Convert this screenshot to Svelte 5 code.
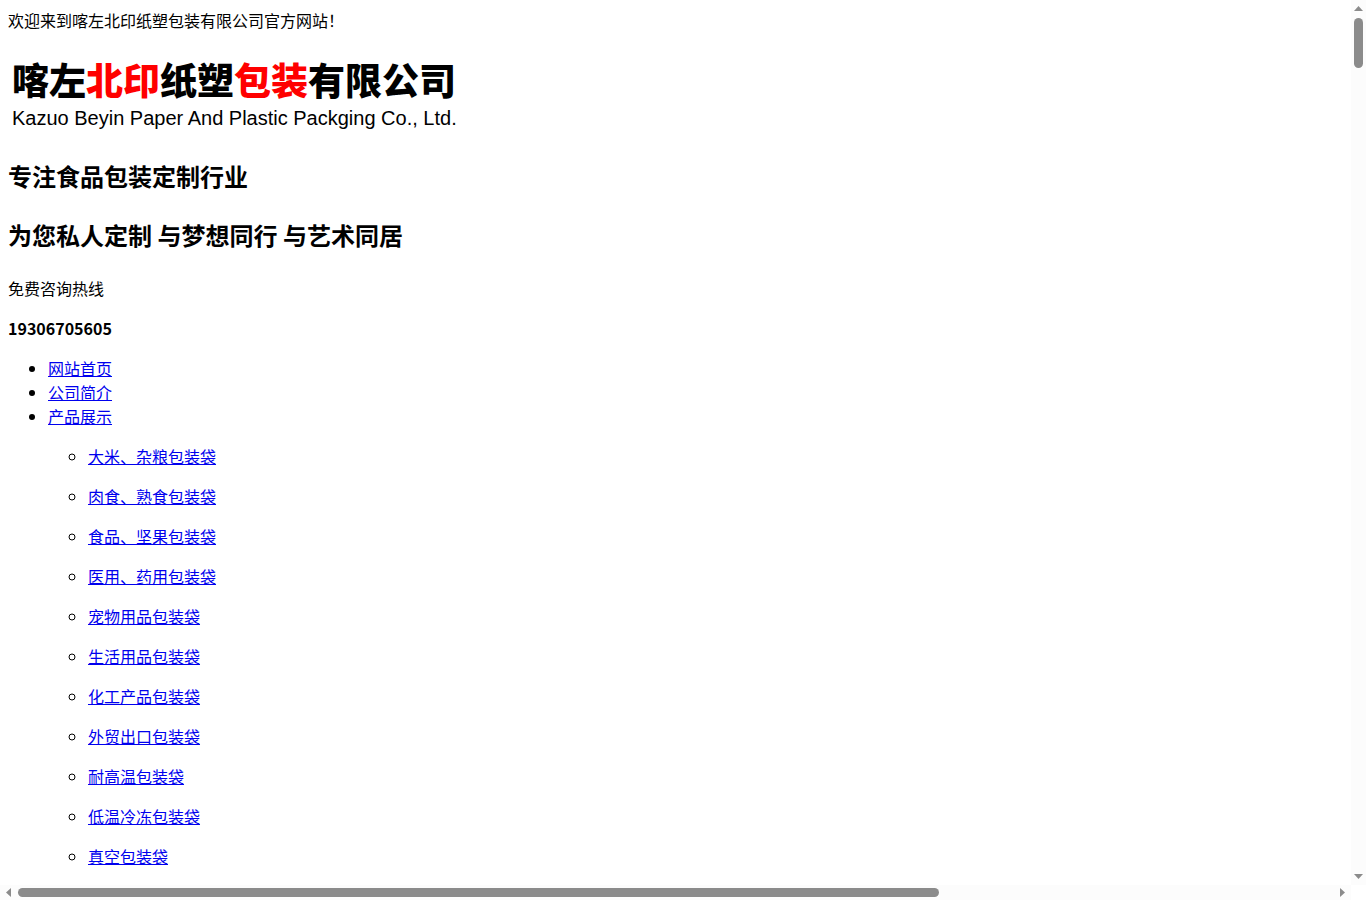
<script>
  const mainLinks = ["网站首页", "公司简介"];
  const products = [
    "大米、杂粮包装袋",
    "肉食、熟食包装袋",
    "食品、坚果包装袋",
    "医用、药用包装袋",
    "宠物用品包装袋",
    "生活用品包装袋",
    "化工产品包装袋",
    "外贸出口包装袋",
    "耐高温包装袋",
    "低温冷冻包装袋",
    "真空包装袋",
  ];
</script>

<div class="window">
  <main class="page">
    <div class="welcome">欢迎来到喀左北印纸塑包装有限公司官方网站！</div>

    <div class="logo">
      <div class="logo-name">喀左<span>北印</span>纸塑<span>包装</span>有限公司</div>
      <div class="logo-en">Kazuo Beyin Paper And Plastic Packging Co., Ltd.</div>
    </div>

    <h2>专注食品包装定制行业</h2>
    <h2>为您私人定制 与梦想同行 与艺术同居</h2>
    <p>免费咨询热线</p>
    <p><b>19306705605</b></p>

    <nav>
      <ul>
        {#each mainLinks as link}
          <li><a href="#top">{link}</a></li>
        {/each}
        <li>
          <a href="#top">产品展示</a>
          <ul>
            {#each products as product}
              <li><p><a href="#top">{product}</a></p></li>
            {/each}
          </ul>
        </li>
      </ul>
    </nav>
  </main>

  <div class="bar vertical" aria-hidden="true">
    <svg width="9" height="5" viewBox="0 0 9 5"><path d="M0 5 4.500 0 9 5z" /></svg>
    <div class="track"><div class="thumb"></div></div>
    <svg width="9" height="5" viewBox="0 0 9 5"><path d="M0 0h9L4.500 5z" /></svg>
  </div>
  <div class="bar horizontal" aria-hidden="true">
    <svg width="5" height="9" viewBox="0 0 5 9"><path d="M5 0v9L0 4.500z" /></svg>
    <div class="track"><div class="thumb"></div></div>
    <svg width="5" height="9" viewBox="0 0 5 9"><path d="M0 0v9l5-4.500z" /></svg>
  </div>
</div>

<style>
  :global(body) {
    margin: 0;
    background: #fff;
  }

  .window {
    display: grid;
    grid-template: minmax(0, 1fr) 15px / minmax(0, 1fr) 15px;
    height: 100vh;
    overflow: hidden;
  }

  .page {
    padding: 8px 8px 0;
    overflow: hidden;
    color: #000;
    font: 16px/24px "Noto Sans CJK SC", sans-serif;
  }

  .logo {
    padding: 20px 4px 4px;
    white-space: nowrap;
  }

  .logo-name {
    font-size: 37px;
    font-weight: 900;
    line-height: 54px;
  }

  .logo-name span {
    color: #f00;
  }

  .logo-en {
    font: 20px/24px "Liberation Sans", Arial, sans-serif;
  }

  h2 {
    margin: 24px 0;
    font-size: 24px;
    line-height: 35px;
  }

  p {
    margin: 16px 0;
  }

  ul {
    margin: 16px 0;
    padding-left: 40px;
  }

  ul ul {
    list-style: circle;
  }

  a {
    color: #0000ee;
  }

  .bar {
    display: flex;
    align-items: center;
    gap: 7px;
    background: #fcfcfc;
  }

  .vertical {
    flex-direction: column;
    padding: 6px 0;
  }

  .horizontal {
    padding: 0 6px;
  }

  .bar svg {
    flex: none;
    fill: #8b8b8b;
  }

  .track {
    flex: 1;
  }

  .thumb {
    border-radius: 5px;
    background: #8b8b8b;
  }

  .vertical .thumb {
    width: 9px;
    height: 50px;
  }

  .horizontal .thumb {
    width: 70%;
    height: 9px;
  }
</style>
